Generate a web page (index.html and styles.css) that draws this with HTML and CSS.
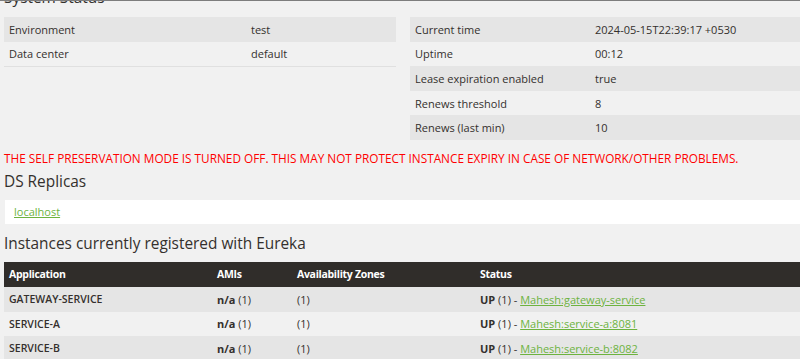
FILE: index.html
```html
<!DOCTYPE html>
<html lang="en">
<head>
    <meta charset="utf-8">
    <title>Eureka</title>
    <link rel="stylesheet" href="styles.css">
</head>
<body>
    <div class="page">
        <h2 class="cut">System Status</h2>
        <div class="status-row">
            <table class="status-table left">
                <tr><td class="key">Environment</td><td>test</td></tr>
                <tr class="last"><td class="key">Data center</td><td>default</td></tr>
            </table>
            <table class="status-table right">
                <tr><td class="key">Current time</td><td>2024-05-15T22:39:17 +0530</td></tr>
                <tr><td class="key">Uptime</td><td>00:12</td></tr>
                <tr><td class="key">Lease expiration enabled</td><td>true</td></tr>
                <tr><td class="key">Renews threshold</td><td>8</td></tr>
                <tr><td class="key">Renews (last min)</td><td>10</td></tr>
            </table>
        </div>
        <p class="warning">THE SELF PRESERVATION MODE IS TURNED OFF. THIS MAY NOT PROTECT INSTANCE EXPIRY IN CASE OF NETWORK/OTHER PROBLEMS.</p>
        <h2 class="replicas-title">DS Replicas</h2>
        <div class="replicas"><a href="#">localhost</a></div>
        <h2 class="instances-title">Instances currently registered with Eureka</h2>
        <table class="instances">
            <thead>
                <tr><th class="c-app">Application</th><th class="c-ami">AMIs</th><th class="c-zone">Availability Zones</th><th>Status</th></tr>
            </thead>
            <tbody>
                <tr><td class="app">GATEWAY-SERVICE</td><td><b>n/a</b> (1)</td><td>(1)</td><td><b>UP</b> (1) - <a href="#">Mahesh:gateway-service</a></td></tr>
                <tr><td class="app">SERVICE-A</td><td><b>n/a</b> (1)</td><td>(1)</td><td><b>UP</b> (1) - <a href="#">Mahesh:service-a:8081</a></td></tr>
                <tr><td class="app">SERVICE-B</td><td><b>n/a</b> (1)</td><td>(1)</td><td><b>UP</b> (1) - <a href="#">Mahesh:service-b:8082</a></td></tr>
            </tbody>
        </table>
    </div>
</body>
</html>
```

FILE: styles.css
```css
body {
    margin: 0;
    border-top: 1px solid #7d7d7d;
    background-color: #f1f1f1;
    color: #34302d;
    font-family: "Open Sans", sans-serif;
    font-size: 11px;
}

.page { padding-left: 4px; overflow: hidden; }

h2 { font-size: 15.4px; font-weight: normal; line-height: 22px; margin: 0; color: #34302d; }
h2.cut { margin-top: -14px; margin-bottom: 8px; }

a { color: #6db33f; }

.status-row { display: grid; grid-template-columns: 392px 392px; gap: 14px; align-items: start; }
.status-table { border-collapse: collapse; width: 100%; }
.status-table td { height: 24.6px; padding: 0 5px; vertical-align: middle; }
.status-table tr:nth-child(odd) { background-color: #e5e5e5; }
.status-table tr.last td { border-bottom: 1px solid #e0e0e0; }
.left .key { width: 232px; }
.right .key { width: 170px; }

.warning { color: #ff0000; font-size: 11.8px; line-height: 16px; margin: 10px 0 5px; }

.replicas-title { margin-bottom: 7px; }
.replicas { background: #fff; margin-left: 1px; height: 24px; padding-left: 9px; display: flex; align-items: center; }

.instances-title { margin-top: 9px; }
.instances { border-collapse: collapse; width: 800px; margin-top: 7px; }
.instances th { background-color: #302d2a; color: #fff; text-align: left; font-weight: bold; font-size: 10.5px; letter-spacing: -0.3px; height: 25px; padding: 0 5px; }
.instances td { height: 24.6px; padding: 0 5px; }
.instances tbody tr:nth-child(odd) { background-color: #e5e5e5; }
.instances .app { font-weight: 600; font-size: 10.5px; }
.c-app { width: 198px; }
.c-ami { width: 70px; }
.c-zone { width: 173px; }
```
